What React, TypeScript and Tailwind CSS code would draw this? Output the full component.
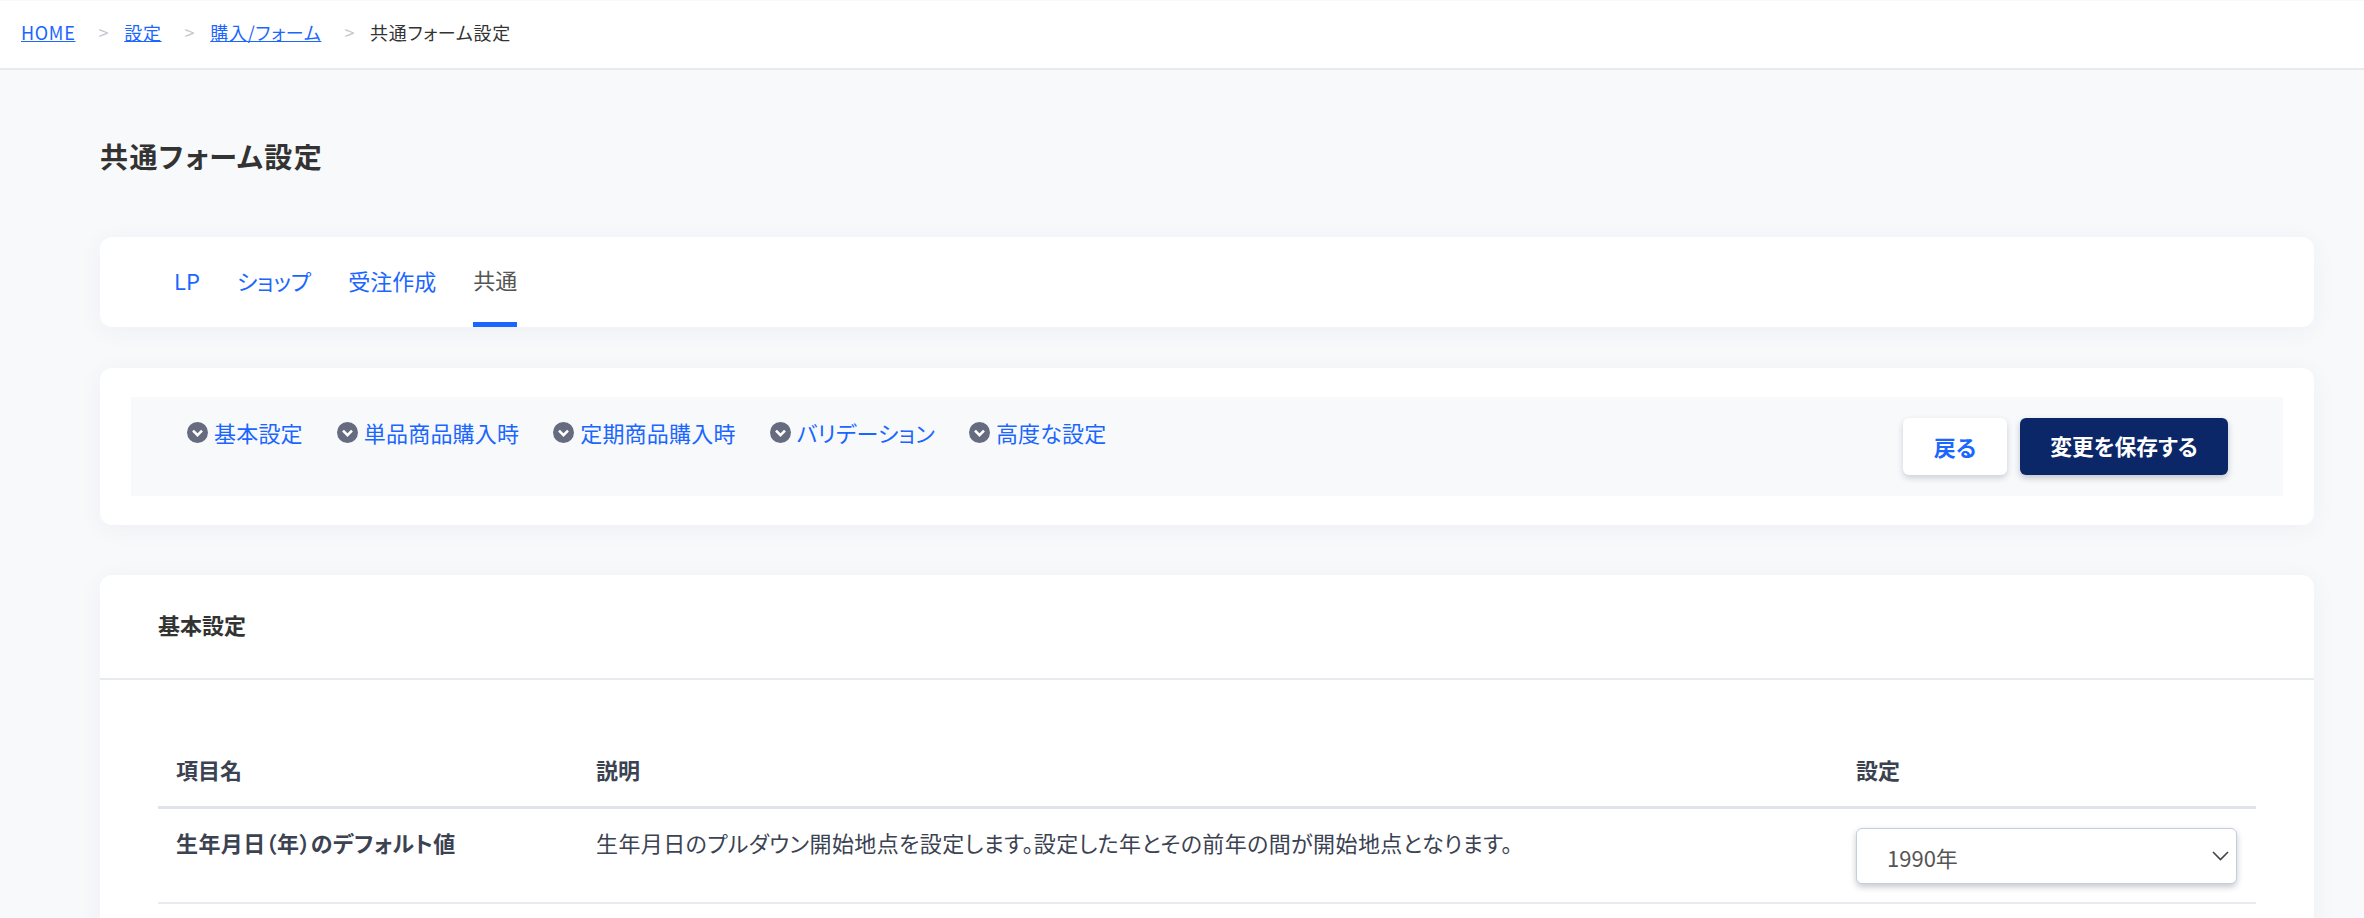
const crumbs = ['HOME', '設定', '購入/フォーム'];

const anchors = ['基本設定', '単品商品購入時', '定期商品購入時', 'バリデーション', '高度な設定'];

function CircleChevron() {
  return (
    <svg viewBox="0 0 21 21" className="h-[21px] w-[21px] shrink-0">
      <circle cx="10.5" cy="10.5" r="10.5" fill="#666b80" />
      <path d="M6 8.6l4.5 4.5L15 8.6" fill="none" stroke="#fff" strokeWidth="2.6" />
    </svg>
  );
}

export default function App() {
  return (
    <div className="h-[918px] overflow-hidden bg-[#f8f9fb] font-['Noto_Sans_CJK_JP','Noto_Sans',sans-serif] text-[#333] [font-feature-settings:'palt']">
      <nav className="mt-px flex h-[69px] items-center border-b-2 border-[#e8eaf0] bg-white pb-[4px] pl-[21px] text-[18px] tracking-[0.7px]">
        {crumbs.map((c) => (
          <span key={c} className="flex items-center">
            <a className="text-[#1a66ff] underline">{c}</a>
            <span className="mr-[15px] ml-[23px] text-[#c4c8d4]">&gt;</span>
          </span>
        ))}
        <span className="text-[#333]">共通フォーム設定</span>
      </nav>

      <main className="px-[100px] pr-[50px]">
        <h1 className="mt-[59px] text-[28px] leading-[54px] font-bold tracking-[1.4px]">共通フォーム設定</h1>

        <section className="mt-[54px] flex h-[90px] gap-[37px] rounded-xl bg-white pl-[74px] text-[22px] shadow-[0_4px_24px_rgba(40,50,90,0.05)]">
          <a className="flex h-full items-center pb-[3px] text-[#1a66ff]">LP</a>
          <a className="flex h-full items-center pb-[3px] text-[#1a66ff]">ショップ</a>
          <a className="flex h-full items-center pb-[3px] text-[#1a66ff]">受注作成</a>
          <a className="flex h-full items-center border-b-[5px] border-[#1a66ff] text-[#555]">共通</a>
        </section>

        <section className="mt-[41px] rounded-xl bg-white px-[31px] py-[29px] shadow-[0_4px_24px_rgba(40,50,90,0.05)]">
          <div className="flex h-[99px] items-start justify-between bg-[#f8f9fb] pr-[55px] pl-[56px]">
            <ul className="flex gap-[34px] pt-[19px] text-[22px] leading-[32px] tracking-[0.2px] text-[#1a66ff]">
              {anchors.map((a) => (
                <li key={a} className="flex items-center gap-[6px] pb-[3px]">
                  <CircleChevron />
                  {a}
                </li>
              ))}
            </ul>
            <div className="flex gap-[13px] pt-[21px] text-[22px] font-bold">
              <button className="h-[57px] w-[104px] rounded-md bg-white text-[#1a66ff] shadow-[0_3px_6px_rgba(30,40,70,0.2)]">
                戻る
              </button>
              <button className="h-[57px] w-[208px] rounded-md bg-[#0c2768] text-[21.75px] text-white shadow-[0_3px_6px_rgba(30,40,70,0.25)]">
                変更を保存する
              </button>
            </div>
          </div>
        </section>

        <section className="mt-[50px] rounded-xl bg-white pb-[60px] shadow-[0_4px_24px_rgba(40,50,90,0.05)]">
          <h2 className="flex h-[105px] items-center border-b-2 border-[#e8eaf0] pb-[4px] pl-[58px] text-[22px] font-bold">
            基本設定
          </h2>
          <div className="mx-[58px] pt-[59px] text-[#3b4252]">
            <div className="grid h-[70px] grid-cols-[420px_1260px_1fr] border-b-[3px] border-[#e0e3ea] pl-[18px] text-[22px] leading-[60px] font-bold">
              <span>項目名</span>
              <span>説明</span>
              <span>設定</span>
            </div>
            <div className="grid h-[95px] grid-cols-[420px_1260px_1fr] border-b-2 border-[#e8eaf0] pl-[18px] text-[22px] tracking-[0.4px]">
              <span className="pt-[17px] leading-[32px] font-bold">生年月日（年）のデフォルト値</span>
              <span className="pt-[17px] leading-[32px]">生年月日のプルダウン開始地点を設定します。設定した年とその前年の間が開始地点となります。</span>
              <div className="pt-[19px] pr-[19px]">
                <div className="flex h-[56px] items-center justify-between rounded-md border border-[#c6cde0] bg-white pr-[7px] pl-[30px] tracking-normal text-[#555] shadow-[0_3px_6px_rgba(30,40,70,0.25)]">
                  <span className="pt-[3px]">1990年</span>
                  <svg viewBox="0 0 17 10" className="mb-[1px] h-[10px] w-[17px]">
                    <path d="M1 1l7.5 7.5L16 1" fill="none" stroke="#444" strokeWidth="1.6" />
                  </svg>
                </div>
              </div>
            </div>
          </div>
        </section>
      </main>
    </div>
  );
}
